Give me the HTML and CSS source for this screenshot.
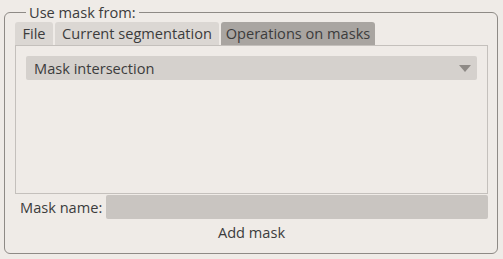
FILE: index.html
```html
<!DOCTYPE html>
<html lang="en">
<head>
  <meta charset="UTF-8">
  <title>Use mask from</title>
  <link rel="stylesheet" href="styles.css">
</head>
<body>
  <fieldset class="mask-group">
    <legend>Use mask from:</legend>

    <div class="tabs">
      <div class="tab tab-file">File</div>
      <div class="tab tab-current">Current segmentation</div>
      <div class="tab tab-ops active">Operations on masks</div>
    </div>

    <div class="tab-pane">
      <div class="combo">
        <span>Mask intersection</span>
        <svg class="arrow" width="12" height="7" viewBox="0 0 12 7"><path d="M0 0 H12 L6 7 Z" fill="#8e8a86"/></svg>
      </div>
    </div>

    <div class="name-row">
      <label for="maskName">Mask name:</label>
      <input type="text" id="maskName">
    </div>

    <button type="button">Add mask</button>
  </fieldset>
</body>
</html>
```

FILE: styles.css
```css
body {
  margin: 0;
  background: #efebe7;
  font-family: "Open Sans", sans-serif;
  font-size: 14.6px;
  color: #3c3c3c;
  width: 503px;
  height: 259px;
  overflow: hidden;
}
.mask-group {
  margin: 2px 0 0 4px;
  width: 494px;
  height: 252px;
  box-sizing: border-box;
  border: 1px solid #8e8a86;
  border-radius: 6px;
  padding: 0 9px 0 10px;
}
.mask-group legend {
  margin-left: 11px;
  padding: 0 3px;
  line-height: 20px;
}
.tabs {
  display: flex;
  gap: 2px;
  height: 23px;
}
.tab {
  background: #dbd7d3;
  border-radius: 3px 3px 0 0;
  text-align: center;
  white-space: nowrap;
  line-height: 23px;
}
.tab-file { width: 38px; }
.tab-current { width: 164px; }
.tab-ops { width: 154px; }
.tab.active {
  background: #a9a5a1;
}
.tab-pane {
  height: 149px;
  box-sizing: border-box;
  border: 1px solid #c4c0bc;
  padding: 10px;
}
.combo {
  height: 24px;
  background: #d5d1cd;
  border-radius: 2px;
  display: flex;
  align-items: center;
  justify-content: space-between;
  padding: 0 6px 0 8px;
}
.name-row {
  display: flex;
  align-items: center;
  margin-top: 1px;
}
.name-row label {
  width: 91px;
  flex: none;
  box-sizing: border-box;
  padding-left: 5px;
  white-space: nowrap;
}
.name-row input {
  flex: 1;
  height: 24px;
  box-sizing: border-box;
  border: none;
  border-radius: 2px;
  background: #c9c5c1;
  font: inherit;
}
button {
  display: block;
  margin: 2px auto 0;
  background: none;
  border: none;
  font: inherit;
  color: inherit;
  line-height: 22px;
  padding: 0 8px;
}
```
